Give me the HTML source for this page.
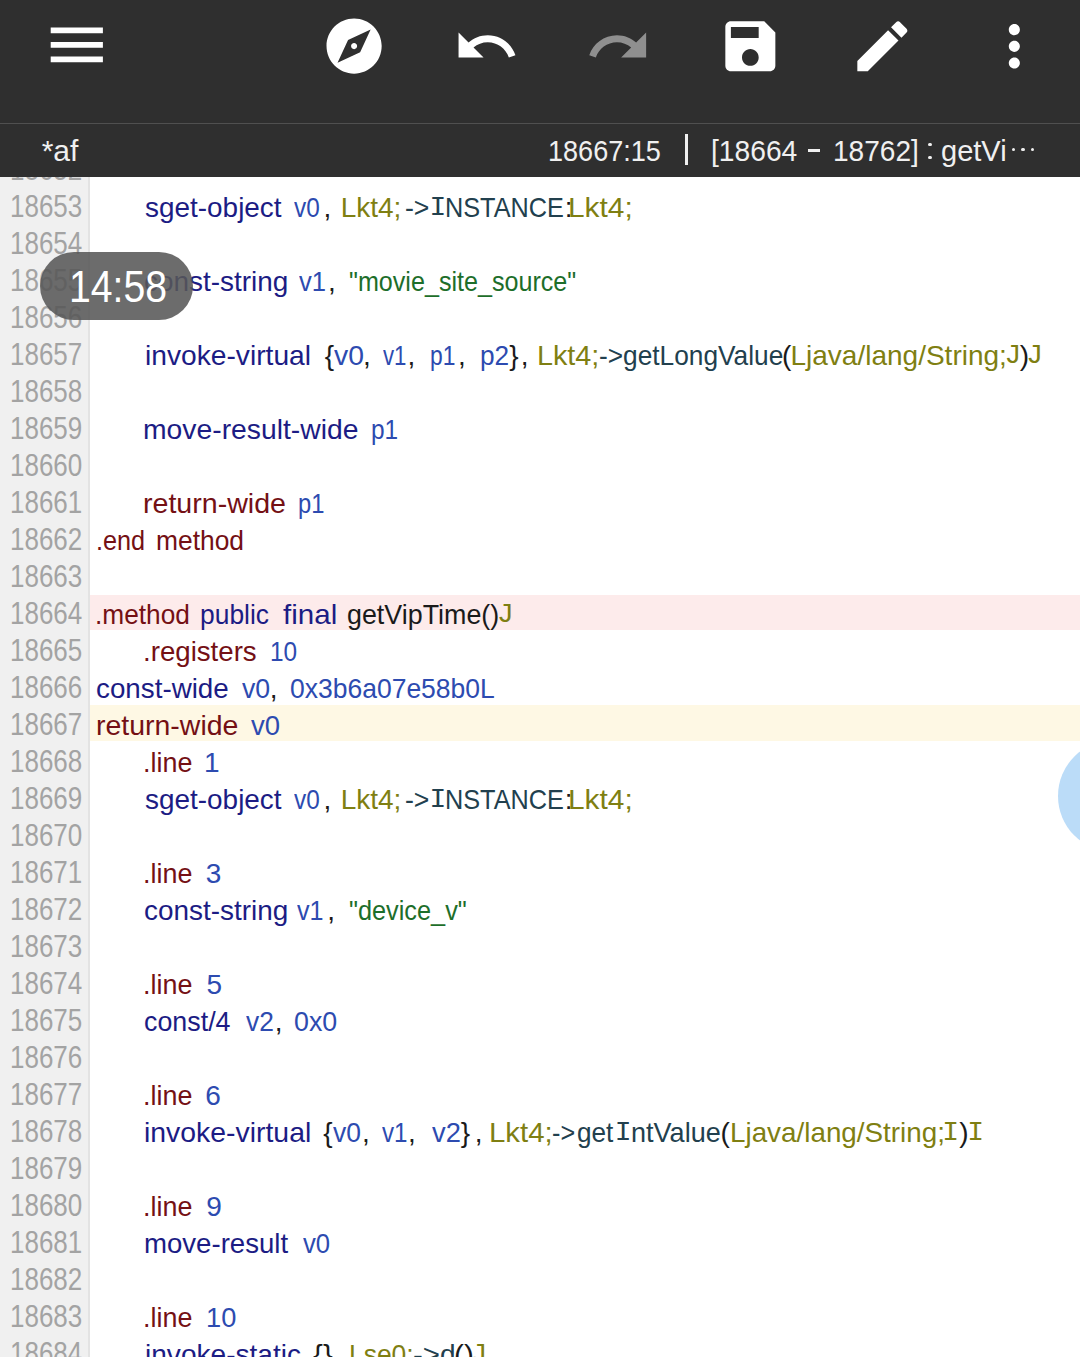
<!DOCTYPE html>
<html><head><meta charset="utf-8"><title>af</title><style>
*{margin:0;padding:0;box-sizing:border-box}
html,body{width:1080px;height:1357px;overflow:hidden;background:#fff;font-family:"Liberation Sans",sans-serif}
.t{position:absolute;white-space:pre;line-height:1;transform-origin:0 0}
.c{}
</style></head><body>
<div style="position:absolute;left:90px;top:595.0px;width:990px;height:35px;background:#fdebeb"></div>
<div style="position:absolute;left:90px;top:705.0px;width:990px;height:36px;background:#fef8e4"></div>
<div style="position:absolute;left:0;top:177px;width:88px;height:1180px;background:#f0f0f0"></div>
<div style="position:absolute;left:88px;top:177px;width:2px;height:1180px;background:#e3e3e3"></div>
<div style="position:absolute;left:1058px;top:740px;width:112px;height:112px;border-radius:50%;background:#bbdcf8"></div>
<div class="t c" style="left:144.90px;top:194.00px;font-size:28px;color:#1c1c84;transform:scaleX(0.9972);">sget-object</div>
<div class="t c" style="left:294.40px;top:194.00px;font-size:28px;color:#2d4bb0;transform:scaleX(0.8690);">v0</div>
<div class="t c" style="left:323.60px;top:194.00px;font-size:28px;color:#1a1a1a;">,</div>
<div class="t c" style="left:340.70px;top:194.00px;font-size:28px;color:#7f7f12;">Lkt4;</div>
<div class="t c" style="left:404.65px;top:194.00px;font-size:28px;color:#22404e;transform:scaleX(0.9518);">-&gt;</div>
<div class="t c" style="left:429.45px;top:194.00px;font-size:28px;font-family:'Liberation Mono',monospace;color:#22404e;">I</div>
<div class="t c" style="left:444.99px;top:194.00px;font-size:28px;color:#22404e;transform:scaleX(0.9028);">NSTANCE</div>
<div class="t c" style="left:564.70px;top:194.00px;font-size:28px;color:#1a1a1a;">:</div>
<div class="t c" style="left:567.87px;top:194.00px;font-size:28px;color:#7f7f12;transform:scaleX(1.0663);">Lkt4;</div>
<div class="t c" style="left:144.00px;top:268.00px;font-size:28px;color:#1c1c84;transform:scaleX(0.9976);">const-string</div>
<div class="t c" style="left:298.90px;top:268.00px;font-size:28px;color:#2d4bb0;transform:scaleX(0.9138);">v1</div>
<div class="t c" style="left:328.00px;top:268.00px;font-size:28px;color:#1a1a1a;">,</div>
<div class="t c" style="left:348.50px;top:268.00px;font-size:28px;color:#1d6e2a;transform:scaleX(0.8970);">"movie_site_source"</div>
<div class="t c" style="left:144.79px;top:342.00px;font-size:28px;color:#1c1c84;transform:scaleX(1.0066);">invoke-virtual</div>
<div class="t c" style="left:324.75px;top:342.00px;font-size:28px;color:#1a1a1a;">{</div>
<div class="t c" style="left:333.70px;top:342.00px;font-size:28px;color:#2d4bb0;transform:scaleX(1.0103);">v0</div>
<div class="t c" style="left:363.00px;top:342.00px;font-size:28px;color:#1a1a1a;">,</div>
<div class="t c" style="left:383.00px;top:342.00px;font-size:28px;color:#2d4bb0;transform:scaleX(0.7931);">v1</div>
<div class="t c" style="left:407.50px;top:342.00px;font-size:28px;color:#1a1a1a;">,</div>
<div class="t c" style="left:430.39px;top:342.00px;font-size:28px;color:#2d4bb0;transform:scaleX(0.8150);">p1</div>
<div class="t c" style="left:458.00px;top:342.00px;font-size:28px;color:#1a1a1a;">,</div>
<div class="t c" style="left:479.56px;top:342.00px;font-size:28px;color:#2d4bb0;transform:scaleX(0.9367);">p2</div>
<div class="t c" style="left:509.15px;top:342.00px;font-size:28px;color:#1a1a1a;">}</div>
<div class="t c" style="left:520.70px;top:342.00px;font-size:28px;color:#1a1a1a;">,</div>
<div class="t c" style="left:537.35px;top:342.00px;font-size:28px;color:#7f7f12;transform:scaleX(1.0259);">Lkt4;</div>
<div class="t c" style="left:599.46px;top:342.00px;font-size:28px;color:#22404e;transform:scaleX(0.9382);">-&gt;getLongValue</div>
<div class="t c" style="left:782.10px;top:342.00px;font-size:28px;color:#1a1a1a;">(</div>
<div class="t c" style="left:790.50px;top:342.00px;font-size:28px;color:#7f7f12;">Ljava/lang/String;</div>
<div class="t c" style="left:1004.50px;top:342.00px;font-size:28px;font-family:'Liberation Mono',monospace;color:#7f7f12;">J</div>
<div class="t c" style="left:1019.80px;top:342.00px;font-size:28px;color:#1a1a1a;">)</div>
<div class="t c" style="left:1026.30px;top:342.00px;font-size:28px;font-family:'Liberation Mono',monospace;color:#7f7f12;">J</div>
<div class="t c" style="left:143.19px;top:416.00px;font-size:28px;color:#1c1c84;transform:scaleX(1.0109);">move-result-wide</div>
<div class="t c" style="left:370.63px;top:416.00px;font-size:28px;color:#2d4bb0;transform:scaleX(0.8724);">p1</div>
<div class="t c" style="left:143.18px;top:490.00px;font-size:28px;color:#741014;transform:scaleX(1.0211);">return-wide</div>
<div class="t c" style="left:298.05px;top:490.00px;font-size:28px;color:#2d4bb0;transform:scaleX(0.8488);">p1</div>
<div class="t c" style="left:95.60px;top:527.00px;font-size:28px;color:#741014;transform:scaleX(0.9013);">.end</div>
<div class="t c" style="left:155.76px;top:527.00px;font-size:28px;color:#741014;transform:scaleX(0.9425);">method</div>
<div class="t c" style="left:95.32px;top:601.00px;font-size:28px;color:#741014;transform:scaleX(0.9375);">.method</div>
<div class="t c" style="left:200.26px;top:601.00px;font-size:28px;color:#1c1c84;transform:scaleX(0.9438);">public</div>
<div class="t c" style="left:282.60px;top:601.00px;font-size:28px;color:#1c1c84;transform:scaleX(1.0550);">final</div>
<div class="t c" style="left:347.34px;top:601.00px;font-size:28px;color:#1a1a1a;transform:scaleX(0.9591);">getVipTime()</div>
<div class="t c" style="left:497.00px;top:601.00px;font-size:28px;font-family:'Liberation Mono',monospace;color:#7f7f12;">J</div>
<div class="t c" style="left:143.43px;top:638.00px;font-size:28px;color:#741014;transform:scaleX(0.9871);">.registers</div>
<div class="t c" style="left:270.06px;top:638.00px;font-size:28px;color:#2d4bb0;transform:scaleX(0.8715);">10</div>
<div class="t c" style="left:96.21px;top:675.00px;font-size:28px;color:#1c1c84;transform:scaleX(0.9920);">const-wide</div>
<div class="t c" style="left:241.70px;top:675.00px;font-size:28px;color:#2d4bb0;transform:scaleX(0.9517);">v0</div>
<div class="t c" style="left:269.80px;top:675.00px;font-size:28px;color:#1a1a1a;">,</div>
<div class="t c" style="left:290.05px;top:675.00px;font-size:28px;color:#2d4bb0;transform:scaleX(0.9462);">0x3b6a07e58b0L</div>
<div class="t c" style="left:96.18px;top:712.00px;font-size:28px;color:#741014;transform:scaleX(1.0167);">return-wide</div>
<div class="t c" style="left:250.80px;top:712.00px;font-size:28px;color:#2d4bb0;transform:scaleX(0.9828);">v0</div>
<div class="t c" style="left:143.48px;top:749.00px;font-size:28px;color:#741014;transform:scaleX(0.9612);">.line</div>
<div class="t c" style="left:204.10px;top:749.00px;font-size:28px;color:#2d4bb0;">1</div>
<div class="t c" style="left:144.90px;top:786.00px;font-size:28px;color:#1c1c84;transform:scaleX(0.9972);">sget-object</div>
<div class="t c" style="left:294.40px;top:786.00px;font-size:28px;color:#2d4bb0;transform:scaleX(0.8690);">v0</div>
<div class="t c" style="left:323.60px;top:786.00px;font-size:28px;color:#1a1a1a;">,</div>
<div class="t c" style="left:340.70px;top:786.00px;font-size:28px;color:#7f7f12;">Lkt4;</div>
<div class="t c" style="left:404.65px;top:786.00px;font-size:28px;color:#22404e;transform:scaleX(0.9518);">-&gt;</div>
<div class="t c" style="left:429.45px;top:786.00px;font-size:28px;font-family:'Liberation Mono',monospace;color:#22404e;">I</div>
<div class="t c" style="left:444.99px;top:786.00px;font-size:28px;color:#22404e;transform:scaleX(0.9028);">NSTANCE</div>
<div class="t c" style="left:564.70px;top:786.00px;font-size:28px;color:#1a1a1a;">:</div>
<div class="t c" style="left:567.87px;top:786.00px;font-size:28px;color:#7f7f12;transform:scaleX(1.0663);">Lkt4;</div>
<div class="t c" style="left:143.48px;top:860.00px;font-size:28px;color:#741014;transform:scaleX(0.9612);">.line</div>
<div class="t c" style="left:205.85px;top:860.00px;font-size:28px;color:#2d4bb0;">3</div>
<div class="t c" style="left:144.00px;top:897.00px;font-size:28px;color:#1c1c84;transform:scaleX(0.9969);">const-string</div>
<div class="t c" style="left:297.30px;top:897.00px;font-size:28px;color:#2d4bb0;transform:scaleX(0.8966);">v1</div>
<div class="t c" style="left:327.30px;top:897.00px;font-size:28px;color:#1a1a1a;">,</div>
<div class="t c" style="left:349.10px;top:897.00px;font-size:28px;color:#1d6e2a;transform:scaleX(0.9031);">"device_v"</div>
<div class="t c" style="left:143.48px;top:971.00px;font-size:28px;color:#741014;transform:scaleX(0.9612);">.line</div>
<div class="t c" style="left:206.50px;top:971.00px;font-size:28px;color:#2d4bb0;">5</div>
<div class="t c" style="left:144.04px;top:1008.00px;font-size:28px;color:#1c1c84;transform:scaleX(0.9583);">const/4</div>
<div class="t c" style="left:246.00px;top:1008.00px;font-size:28px;color:#2d4bb0;transform:scaleX(0.9414);">v2</div>
<div class="t c" style="left:274.70px;top:1008.00px;font-size:28px;color:#1a1a1a;">,</div>
<div class="t c" style="left:294.04px;top:1008.00px;font-size:28px;color:#2d4bb0;transform:scaleX(0.9570);">0x0</div>
<div class="t c" style="left:143.48px;top:1082.00px;font-size:28px;color:#741014;transform:scaleX(0.9612);">.line</div>
<div class="t c" style="left:205.35px;top:1082.00px;font-size:28px;color:#2d4bb0;">6</div>
<div class="t c" style="left:143.99px;top:1119.00px;font-size:28px;color:#1c1c84;transform:scaleX(1.0139);">invoke-virtual</div>
<div class="t c" style="left:323.30px;top:1119.00px;font-size:28px;color:#1a1a1a;">{</div>
<div class="t c" style="left:333.30px;top:1119.00px;font-size:28px;color:#2d4bb0;transform:scaleX(0.9448);">v0</div>
<div class="t c" style="left:362.00px;top:1119.00px;font-size:28px;color:#1a1a1a;">,</div>
<div class="t c" style="left:381.70px;top:1119.00px;font-size:28px;color:#2d4bb0;transform:scaleX(0.8621);">v1</div>
<div class="t c" style="left:408.00px;top:1119.00px;font-size:28px;color:#1a1a1a;">,</div>
<div class="t c" style="left:431.70px;top:1119.00px;font-size:28px;color:#2d4bb0;transform:scaleX(0.9759);">v2</div>
<div class="t c" style="left:460.70px;top:1119.00px;font-size:28px;color:#1a1a1a;">}</div>
<div class="t c" style="left:474.70px;top:1119.00px;font-size:28px;color:#1a1a1a;">,</div>
<div class="t c" style="left:488.50px;top:1119.00px;font-size:28px;color:#7f7f12;transform:scaleX(1.0488);">Lkt4;</div>
<div class="t c" style="left:552.10px;top:1119.00px;font-size:28px;color:#22404e;transform:scaleX(0.9004);">-&gt;</div>
<div class="t c" style="left:577.17px;top:1119.00px;font-size:28px;color:#22404e;transform:scaleX(0.9333);">get</div>
<div class="t c" style="left:614.80px;top:1119.00px;font-size:28px;font-family:'Liberation Mono',monospace;color:#22404e;">I</div>
<div class="t c" style="left:631.23px;top:1119.00px;font-size:28px;color:#22404e;transform:scaleX(0.9659);">ntValue</div>
<div class="t c" style="left:720.40px;top:1119.00px;font-size:28px;color:#1a1a1a;">(</div>
<div class="t c" style="left:730.21px;top:1119.00px;font-size:28px;color:#7f7f12;transform:scaleX(0.9935);">Ljava/lang/String;</div>
<div class="t c" style="left:942.15px;top:1119.00px;font-size:28px;font-family:'Liberation Mono',monospace;color:#7f7f12;">I</div>
<div class="t c" style="left:959.30px;top:1119.00px;font-size:28px;color:#1a1a1a;">)</div>
<div class="t c" style="left:967.35px;top:1119.00px;font-size:28px;font-family:'Liberation Mono',monospace;color:#7f7f12;">I</div>
<div class="t c" style="left:143.48px;top:1193.00px;font-size:28px;color:#741014;transform:scaleX(0.9612);">.line</div>
<div class="t c" style="left:206.15px;top:1193.00px;font-size:28px;color:#2d4bb0;">9</div>
<div class="t c" style="left:144.02px;top:1230.00px;font-size:28px;color:#1c1c84;transform:scaleX(0.9850);">move-result</div>
<div class="t c" style="left:302.70px;top:1230.00px;font-size:28px;color:#2d4bb0;transform:scaleX(0.9172);">v0</div>
<div class="t c" style="left:143.48px;top:1304.00px;font-size:28px;color:#741014;transform:scaleX(0.9612);">.line</div>
<div class="t c" style="left:206.05px;top:1304.00px;font-size:28px;color:#2d4bb0;transform:scaleX(0.9730);">10</div>
<div class="t c" style="left:144.60px;top:1341.00px;font-size:28px;color:#1c1c84;transform:scaleX(1.0025);">invoke-static</div>
<div class="t c" style="left:312.60px;top:1341.00px;font-size:28px;color:#1a1a1a;transform:scaleX(1.0571);">{}</div>
<div class="t c" style="left:334.00px;top:1341.00px;font-size:28px;color:#1a1a1a;">,</div>
<div class="t c" style="left:349.41px;top:1341.00px;font-size:28px;color:#7f7f12;transform:scaleX(0.9441);">Lse0;</div>
<div class="t c" style="left:413.35px;top:1341.00px;font-size:28px;color:#22404e;transform:scaleX(1.0504);">-&gt;</div>
<div class="t c" style="left:440.10px;top:1341.00px;font-size:28px;color:#22404e;">d</div>
<div class="t c" style="left:454.14px;top:1341.00px;font-size:28px;color:#1a1a1a;transform:scaleX(1.0598);">()</div>
<div class="t c" style="left:470.60px;top:1341.00px;font-size:28px;font-family:'Liberation Mono',monospace;color:#7f7f12;">J</div>
<div class="t" style="left:10.38px;top:153.11px;font-size:32px;color:#a3a3a3;transform:scaleX(0.8122);">18652</div>
<div class="t" style="left:10.38px;top:190.11px;font-size:32px;color:#a3a3a3;transform:scaleX(0.8122);">18653</div>
<div class="t" style="left:10.38px;top:227.11px;font-size:32px;color:#a3a3a3;transform:scaleX(0.8122);">18654</div>
<div class="t" style="left:10.38px;top:264.11px;font-size:32px;color:#a3a3a3;transform:scaleX(0.8122);">18655</div>
<div class="t" style="left:10.38px;top:301.11px;font-size:32px;color:#a3a3a3;transform:scaleX(0.8122);">18656</div>
<div class="t" style="left:10.38px;top:338.11px;font-size:32px;color:#a3a3a3;transform:scaleX(0.8122);">18657</div>
<div class="t" style="left:10.38px;top:375.11px;font-size:32px;color:#a3a3a3;transform:scaleX(0.8122);">18658</div>
<div class="t" style="left:10.38px;top:412.11px;font-size:32px;color:#a3a3a3;transform:scaleX(0.8122);">18659</div>
<div class="t" style="left:10.38px;top:449.11px;font-size:32px;color:#a3a3a3;transform:scaleX(0.8122);">18660</div>
<div class="t" style="left:10.38px;top:486.11px;font-size:32px;color:#a3a3a3;transform:scaleX(0.8122);">18661</div>
<div class="t" style="left:10.38px;top:523.11px;font-size:32px;color:#a3a3a3;transform:scaleX(0.8122);">18662</div>
<div class="t" style="left:10.38px;top:560.11px;font-size:32px;color:#a3a3a3;transform:scaleX(0.8122);">18663</div>
<div class="t" style="left:10.38px;top:597.11px;font-size:32px;color:#a3a3a3;transform:scaleX(0.8122);">18664</div>
<div class="t" style="left:10.38px;top:634.11px;font-size:32px;color:#a3a3a3;transform:scaleX(0.8122);">18665</div>
<div class="t" style="left:10.38px;top:671.11px;font-size:32px;color:#a3a3a3;transform:scaleX(0.8122);">18666</div>
<div class="t" style="left:10.38px;top:708.11px;font-size:32px;color:#a3a3a3;transform:scaleX(0.8122);">18667</div>
<div class="t" style="left:10.38px;top:745.11px;font-size:32px;color:#a3a3a3;transform:scaleX(0.8122);">18668</div>
<div class="t" style="left:10.38px;top:782.11px;font-size:32px;color:#a3a3a3;transform:scaleX(0.8122);">18669</div>
<div class="t" style="left:10.38px;top:819.11px;font-size:32px;color:#a3a3a3;transform:scaleX(0.8122);">18670</div>
<div class="t" style="left:10.38px;top:856.11px;font-size:32px;color:#a3a3a3;transform:scaleX(0.8122);">18671</div>
<div class="t" style="left:10.38px;top:893.11px;font-size:32px;color:#a3a3a3;transform:scaleX(0.8122);">18672</div>
<div class="t" style="left:10.38px;top:930.11px;font-size:32px;color:#a3a3a3;transform:scaleX(0.8122);">18673</div>
<div class="t" style="left:10.38px;top:967.11px;font-size:32px;color:#a3a3a3;transform:scaleX(0.8122);">18674</div>
<div class="t" style="left:10.38px;top:1004.11px;font-size:32px;color:#a3a3a3;transform:scaleX(0.8122);">18675</div>
<div class="t" style="left:10.38px;top:1041.11px;font-size:32px;color:#a3a3a3;transform:scaleX(0.8122);">18676</div>
<div class="t" style="left:10.38px;top:1078.11px;font-size:32px;color:#a3a3a3;transform:scaleX(0.8122);">18677</div>
<div class="t" style="left:10.38px;top:1115.11px;font-size:32px;color:#a3a3a3;transform:scaleX(0.8122);">18678</div>
<div class="t" style="left:10.38px;top:1152.11px;font-size:32px;color:#a3a3a3;transform:scaleX(0.8122);">18679</div>
<div class="t" style="left:10.38px;top:1189.11px;font-size:32px;color:#a3a3a3;transform:scaleX(0.8122);">18680</div>
<div class="t" style="left:10.38px;top:1226.11px;font-size:32px;color:#a3a3a3;transform:scaleX(0.8122);">18681</div>
<div class="t" style="left:10.38px;top:1263.11px;font-size:32px;color:#a3a3a3;transform:scaleX(0.8122);">18682</div>
<div class="t" style="left:10.38px;top:1300.11px;font-size:32px;color:#a3a3a3;transform:scaleX(0.8122);">18683</div>
<div class="t" style="left:10.38px;top:1337.11px;font-size:32px;color:#a3a3a3;transform:scaleX(0.8122);">18684</div>
<div style="position:absolute;left:0;top:0;width:1080px;height:177px;background:#2f2f2f"></div>
<div style="position:absolute;left:0;top:123px;width:1080px;height:1px;background:#505050"></div>
<svg style="position:absolute;left:42.2px;top:9.7px;width:69.6px;height:69.6px" viewBox="0 0 24 24"><path fill="#ffffff" d="M3 18h18v-2H3v2zm0-5h18v-2H3v2zm0-7v2h18V6H3z"/></svg>
<svg style="position:absolute;left:320.9px;top:12.9px;width:66.2px;height:66.2px" viewBox="0 0 24 24"><path fill="#ffffff" d="M12 10.9c-.61 0-1.1.49-1.1 1.1s.49 1.1 1.1 1.1c.61 0 1.1-.49 1.1-1.1s-.49-1.1-1.1-1.1zM12 2C6.48 2 2 6.48 2 12s4.48 10 10 10 10-4.48 10-10S17.52 2 12 2zm2.19 12.19L6 18l3.81-8.19L18 6l-3.81 8.19z"/></svg>
<svg style="position:absolute;left:452.6px;top:13.1px;width:66.7px;height:66.7px" viewBox="0 0 24 24"><path fill="#ffffff" d="M12.5 8c-2.65 0-5.05.99-6.9 2.6L2 7v9h9l-3.62-3.62c1.39-1.16 3.16-1.88 5.12-1.88 3.54 0 6.55 2.31 7.6 5.5l2.37-.78C21.08 11.03 17.15 8 12.5 8z"/></svg>
<svg style="position:absolute;left:584.6px;top:13.1px;width:66.7px;height:66.7px" viewBox="0 0 24 24"><path fill="#8f8f8f" d="M18.4 10.6C16.55 8.99 14.15 8 11.5 8c-4.65 0-8.58 3.03-9.96 7.22L3.9 16c1.05-3.19 4.05-5.5 7.6-5.5 1.95 0 3.73.72 5.12 1.88L13 16h9V7l-3.6 3.6z"/></svg>
<svg style="position:absolute;left:716.6px;top:13.1px;width:66.7px;height:66.7px" viewBox="0 0 24 24"><path fill="#ffffff" d="M17 3H5c-1.11 0-2 .9-2 2v14c0 1.1.89 2 2 2h14c1.1 0 2-.9 2-2V7l-4-4zm-5 16c-1.66 0-3-1.34-3-3s1.34-3 3-3 3 1.34 3 3-1.34 3-3 3zm3-10H5V5h10v4z"/></svg>
<svg style="position:absolute;left:848.6px;top:13.1px;width:66.7px;height:66.7px" viewBox="0 0 24 24"><path fill="#ffffff" d="M3 17.25V21h3.75L17.81 9.94l-3.75-3.75L3 17.25zM20.71 7.04c.39-.39.39-1.02 0-1.41l-2.34-2.34c-.39-.39-1.02-.39-1.41 0l-1.83 1.83 3.75 3.75 1.83-1.83z"/></svg>
<svg style="position:absolute;left:980.6px;top:13.1px;width:66.7px;height:66.7px" viewBox="0 0 24 24"><path fill="#ffffff" d="M12 8c1.1 0 2-.9 2-2s-.9-2-2-2-2 .9-2 2 .9 2 2 2zm0 2c-1.1 0-2 .9-2 2s.9 2 2 2 2-.9 2-2-.9-2-2-2zm0 6c-1.1 0-2 .9-2 2s.9 2 2 2 2-.9 2-2-.9-2-2-2z"/></svg>
<div class="t" style="left:41.70px;top:135.80px;font-size:30px;color:#f0f0f0;">*af</div>
<div class="t" style="left:548.20px;top:135.85px;font-size:30px;color:#f0f0f0;transform:scaleX(0.9025);">18667:15</div>
<div class="t" style="left:710.62px;top:135.85px;font-size:30px;color:#f0f0f0;transform:scaleX(0.9402);">[18664</div>
<div class="t" style="left:832.83px;top:135.85px;font-size:30px;color:#f0f0f0;transform:scaleX(0.9353);">18762]</div>
<div class="t" style="left:941.03px;top:135.85px;font-size:30px;color:#f0f0f0;transform:scaleX(0.9667);">getVi</div>
<div style="position:absolute;left:685px;top:134px;width:2.5px;height:31px;background:#f0f0f0"></div>
<div style="position:absolute;left:808.3px;top:149.2px;width:11.8px;height:2.8px;background:#f0f0f0"></div>
<div style="position:absolute;left:928.4px;top:142.8px;width:3.2px;height:3.2px;border-radius:50%;background:#f0f0f0"></div>
<div style="position:absolute;left:928.4px;top:155.6px;width:3.2px;height:3.2px;border-radius:50%;background:#f0f0f0"></div>
<div style="position:absolute;left:1011.7px;top:148.1px;width:3.2px;height:3.2px;border-radius:50%;background:#f0f0f0"></div>
<div style="position:absolute;left:1021.4px;top:148.1px;width:3.2px;height:3.2px;border-radius:50%;background:#f0f0f0"></div>
<div style="position:absolute;left:1030.9px;top:148.1px;width:3.2px;height:3.2px;border-radius:50%;background:#f0f0f0"></div>
<div style="position:absolute;left:40px;top:252px;width:153px;height:68px;border-radius:34px;background:rgba(88,88,88,0.88)"></div>
<div class="t" style="left:69.03px;top:265.25px;font-size:44px;color:#ffffff;transform:scaleX(0.8908);">14:58</div>
</body></html>
